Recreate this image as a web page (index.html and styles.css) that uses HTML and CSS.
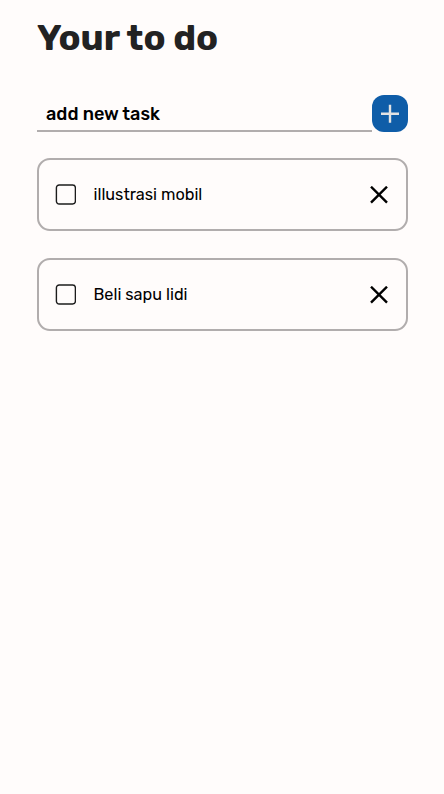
FILE: index.html
```html
<!DOCTYPE html>
<html lang="en">
<head>
<meta charset="utf-8">
<title>Your to do</title>
<link rel="stylesheet" href="styles.css">
</head>
<body>
<main class="app">
  <h1 class="title">Your to do</h1>
  <form class="new-task">
    <span class="field">add new task</span>
    <button class="add" type="button" aria-label="Add"><svg width="36" height="37" viewBox="0 0 36 37"><path d="M18 9.7v18M9 18.7h18"/></svg></button>
  </form>
  <ul class="tasks">
    <li class="task"><svg class="box" width="21" height="21" viewBox="0 0 21 21"><rect x="1.4" y="1" width="19" height="19" rx="2.8"/></svg><span class="label">illustrasi mobil</span><svg class="remove" width="18" height="18" viewBox="0 0 18 18"><path d="M1 .7l16 16M17 .7L1 16.7"/></svg></li>
    <li class="task"><svg class="box" width="21" height="21" viewBox="0 0 21 21"><rect x="1.4" y="1" width="19" height="19" rx="2.8"/></svg><span class="label">Beli sapu lidi</span><svg class="remove" width="18" height="18" viewBox="0 0 18 18"><path d="M1 .7l16 16M17 .7L1 16.7"/></svg></li>
  </ul>
</main>
</body>
</html>
```
FILE: styles.css
```css
* { box-sizing: border-box; }
body { margin: 0; background: #fffcfb; color: #000; font-family: Rubik, "Open Sans", sans-serif; }
.app { padding: 16px 36px 0 37px; }
.title { margin: 0; font-size: 36.2px; line-height: 43px; font-weight: 700; color: #222; }
.new-task { display: flex; margin-top: 36px; height: 37px; }
.field { flex: 1; border-bottom: 2px solid #b1adad; padding-left: 9px; font-size: 18.1px; font-weight: 500; line-height: 39px; }
.add { width: 36px; padding: 0; border: 0; border-radius: 12px; background: #0f5da8; }
.add svg { display: block; fill: none; stroke: #e3e3e3; stroke-width: 2.4; }
.tasks { list-style: none; margin: 26px 0 0; padding: 0; display: grid; gap: 27px; }
.task { height: 73px; display: flex; align-items: center; border: 2px solid #b1adad; border-radius: 13px; padding: 0 18px 0 16px; }
.box { fill: none; stroke: #1c1c1c; stroke-width: 1.4; }
.label { flex: 1; margin-left: 17.5px; font-size: 16.25px; }
.remove { fill: none; stroke: #000; stroke-width: 2.4; }
```
